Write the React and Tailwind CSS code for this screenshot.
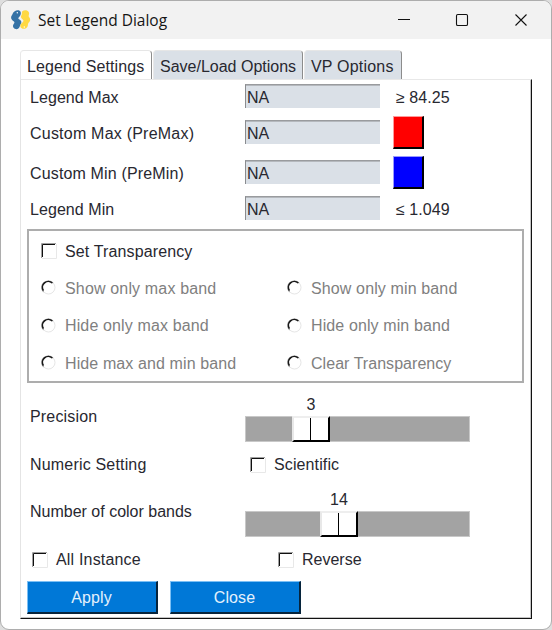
const labelFont = "font-['Liberation_Sans',Arial,sans-serif] text-[16px] leading-[20px] whitespace-pre";

function Label({ children, className = "" }) {
  return <span className={`${labelFont} ${className}`}>{children}</span>;
}

function PySimpleLogo() {
  return (
    <svg width="20" height="20" viewBox="0 0 20 20" className="shrink-0">
      <path
        d="M3.400 1.600C5.600-.2 9-.1 9.700 2.200c.5 2-.3 3.800-2 5.200-.8.800-.3 1.300.8 2.100 2.300 1.400 2.200 3.400 1.100 4.900l-1 2.400c-.8 2.600-3.200 2.800-4.800 2-2.200-1.300-2.300-3.400-.8-5.200.8-1 .5-1.600-.7-2.500C-.1 9.300-.5 7 .9 5.300c.9-1 1-2.700 2.500-3.700z"
        fill="#3572a5"
      />
      <path
        d="M11.300 1.300c1.600-1.500 5.200-1.400 6.400.6 1 1.600-.1 3.200-.1 4.200 0 1.100 1.700 1.900 1.600 4-.2 2-2 2.500-2.200 4.100-.1 1.900-.7 4-3 4.500-2.300.5-4.600-.5-4.700-2.700-.1-1.800 1.300-2.800 2.600-4.100 1-1 .6-1.700-.5-2.600-1.700-1.300-1.900-2.800-.8-4.200.5-.8.100-2.900.7-3.800z"
        fill="#ffd942"
      />
      <circle cx="6.300" cy="2.800" r="0.700" fill="#fff" />
      <circle cx="13.300" cy="17" r="0.700" fill="#fff" />
    </svg>
  );
}

function CheckBox() {
  return (
    <svg width="16" height="16" viewBox="0 0 16 16" className="shrink-0">
      <path d="M1 15.500H15.500V1" fill="none" stroke="#e8e8e8" />
      <path d="M.5 15V.5H15" fill="none" stroke="#a0a0a0" />
      <path d="M1.500 14V1.500H14" fill="none" stroke="#101010" />
    </svg>
  );
}

function Radio() {
  return (
    <svg width="15" height="15" viewBox="0 0 15 15" className="shrink-0">
      <circle cx="7.500" cy="7.500" r="6.500" fill="#fff" stroke="#e6e6e6" />
      <path d="M2.600 12A6.300 6.300 0 0 1 12 3" fill="none" stroke="#aaa" strokeWidth="1.200" />
      <path d="M2.400 10.600A5.900 5.900 0 0 1 11.300 3" fill="none" stroke="#181818" strokeWidth="1.600" />
    </svg>
  );
}

function Field() {
  return (
    <div className="mb-0.5 flex h-6 w-[135px] shrink-0 items-center border-t border-l border-t-[#999b9e] border-l-[#8a8c8f] bg-[#dae0e7] pl-px shadow-[inset_0_1px_0_#b4b8bd]">
      <Label className="mt-0.5">NA</Label>
    </div>
  );
}

function Swatch({ className }) {
  return (
    <div className={`mb-0.5 ml-[13px] h-[33px] w-[31px] border-t border-r-2 border-b-2 border-l border-r-black border-b-black ${className}`} />
  );
}

function LegendRow({ label, className, spacing = "", children }) {
  return (
    <div className={`flex items-center pl-[9px] ${className}`}>
      <div className="flex w-[215px]">
        <Label className={spacing}>{label}</Label>
      </div>
      <Field />
      {children}
    </div>
  );
}

function RadioRow({ left, right, className, leftSpacing = "", rightSpacing = "" }) {
  return (
    <div className={`flex items-center pl-3 text-[#808080] ${className}`}>
      <div className="flex w-[246px] items-center gap-[9px]">
        <Radio />
        <Label className={`mt-0.5 ${leftSpacing}`}>{left}</Label>
      </div>
      <div className="flex items-center gap-[9px]">
        <Radio />
        <Label className={`mt-0.5 ${rightSpacing}`}>{right}</Label>
      </div>
    </div>
  );
}

function Slider({ value, startClass }) {
  return (
    <div className="flex w-[225px] flex-col">
      <div className={`flex w-[38px] justify-center ${startClass}`}>
        <Label className="mt-px -mb-px">{value}</Label>
      </div>
      <div className="mt-0.5 h-[26px] border border-[#c8c8c8] bg-[#a3a3a3]">
        <div
          className={`-mt-px -ml-px flex h-[26px] w-[38px] border-t-2 border-r-2 border-b-2 border-l-2 border-t-[#eee] border-l-[#e8e8e8] border-r-black border-b-black bg-white pl-4 ${startClass}`}
        >
          <div className="h-full w-px bg-black" />
        </div>
      </div>
    </div>
  );
}

function ActionButton({ children }) {
  return (
    <button className="flex h-[33px] w-[131px] items-center justify-center border-t border-r-2 border-b-2 border-l border-t-[#7cc0f5] border-r-[#06243c] border-b-[#06243c] border-l-[#7cc0f5] bg-[#0078d7] text-[#e4f1fc]">
      <Label className="mt-0.5 mr-px tracking-[0.1px]">{children}</Label>
    </button>
  );
}

function Tab({ children, className }) {
  return (
    <div className={`flex items-center rounded-t-[4px] border-t border-r border-l border-t-[#e6e6e6] border-r-[#8c8c8c] border-l-[#e8e8e8] ${className}`}>
      <Label className="mt-[3px]">{children}</Label>
    </div>
  );
}

export default function App() {
  return (
    <div className="h-[630px] w-[552px] bg-[#dedede] text-[#282830]">
      <div className="flex h-[630px] w-[552px] flex-col overflow-hidden rounded-[9px] border border-[#adadad] bg-white">
        <header className="flex h-[38px] shrink-0 items-center bg-[#f2f2f2] pl-2.5">
          <PySimpleLogo />
          <h1 className="ml-[7px] w-[344px] shrink-0 pb-px font-['Open_Sans','Noto_Sans',sans-serif] text-[15.500px] leading-5 whitespace-nowrap text-[#151515]">
            Set Legend Dialog
          </h1>
          <svg width="150" height="16" viewBox="0 0 150 16" fill="none" stroke="#111" strokeWidth="1.100" className="shrink-0">
            <path d="M16 7.500H28" />
            <rect x="74.500" y="2.500" width="11" height="11" rx="1.300" />
            <path d="M133.500 2.500L144.500 13.500M144.500 2.500L133.500 13.500" />
          </svg>
        </header>
        <main className="flex flex-col pt-[11px] pl-[19px]">
          <nav className="flex h-[29px] gap-px">
            <Tab className="w-[132px] bg-white pl-1.5 tracking-[0.120px]">Legend Settings</Tab>
            <Tab className="w-[150px] bg-[#dae0e7] pl-1.5">Save/Load Options</Tab>
            <Tab className="w-[98px] bg-[#dae0e7] pl-1.5 tracking-[0.200px]">VP Options</Tab>
          </nav>
          <section className="flex h-[540px] w-[512px] flex-col border-t border-r border-b border-l border-t-[#e8e8e8] border-r-[#111] border-b-[#111] border-l-[#e4e4e4] shadow-[inset_-1px_-1px_0_#c4c4c4]">
            <LegendRow label="Legend Max" spacing="mt-px tracking-[0.060px]" className="h-[34px]">
              <Label className="mt-px ml-4 tracking-[0.060px]">≥ 84.25</Label>
            </LegendRow>
            <LegendRow label="Custom Max (PreMax)" spacing="mt-px tracking-[0.220px]" className="h-[38px]">
              <Swatch className="border-t-[#ff9a9a] border-l-[#ff9a9a] bg-[#ff0000]" />
            </LegendRow>
            <LegendRow label="Custom Min (PreMin)" spacing="mt-px tracking-[0.150px]" className="h-[42px]">
              <Swatch className="border-t-[#9a9aff] border-l-[#9a9aff] bg-[#0000ff]" />
            </LegendRow>
            <LegendRow label="Legend Min" spacing="mt-px tracking-[0.060px]" className="h-[30px]">
              <Label className="mt-px ml-4 tracking-[0.060px]">≤ 1.049</Label>
            </LegendRow>
            <div className="mt-[5px] ml-1.5 h-[154px] w-[497px] border-2 border-[#adadad] pt-px">
              <div className="flex h-[37px] items-center gap-2 pl-3">
                <CheckBox />
                <Label className="mt-0.5 tracking-[0.130px]">Set Transparency</Label>
              </div>
              <RadioRow className="h-[37px]" left="Show only max band" leftSpacing="tracking-[0.160px]" right="Show only min band" rightSpacing="tracking-[0.130px]" />
              <RadioRow className="h-[38px]" left="Hide only max band" leftSpacing="tracking-[0.130px]" right="Hide only min band" rightSpacing="tracking-[0.110px]" />
              <RadioRow className="h-[37px]" left="Hide max and min band" leftSpacing="tracking-[0.110px]" right="Clear Transparency" rightSpacing="tracking-[0.040px]" />
            </div>
            <div className="mt-[11px] flex h-12 items-center pl-[9px]">
              <div className="flex w-[215px]">
                <Label className="mb-0.5 tracking-[0.180px]">Precision</Label>
              </div>
              <Slider value="3" startClass="translate-x-[47px]" />
            </div>
            <div className="flex h-[47px] items-center pb-[2px] pl-[9px]">
              <div className="flex w-[220px]">
                <Label className="tracking-[0.180px]">Numeric Setting</Label>
              </div>
              <CheckBox />
              <Label className="ml-2 tracking-[0.120px]">Scientific</Label>
            </div>
            <div className="flex h-12 items-center pl-[9px]">
              <div className="flex w-[215px]">
                <Label className="mb-0.5">Number of color bands</Label>
              </div>
              <Slider value="14" startClass="translate-x-[75px]" />
            </div>
            <div className="mt-0.5 flex h-[42px] items-center pl-[11px]">
              <div className="flex w-[246px] items-center gap-2">
                <CheckBox />
                <Label className="tracking-[0.180px]">All Instance</Label>
              </div>
              <div className="flex items-center gap-2">
                <CheckBox />
                <Label>Reverse</Label>
              </div>
            </div>
            <div className="flex gap-3 pl-1.5">
              <ActionButton>Apply</ActionButton>
              <ActionButton>Close</ActionButton>
            </div>
          </section>
        </main>
      </div>
    </div>
  );
}
